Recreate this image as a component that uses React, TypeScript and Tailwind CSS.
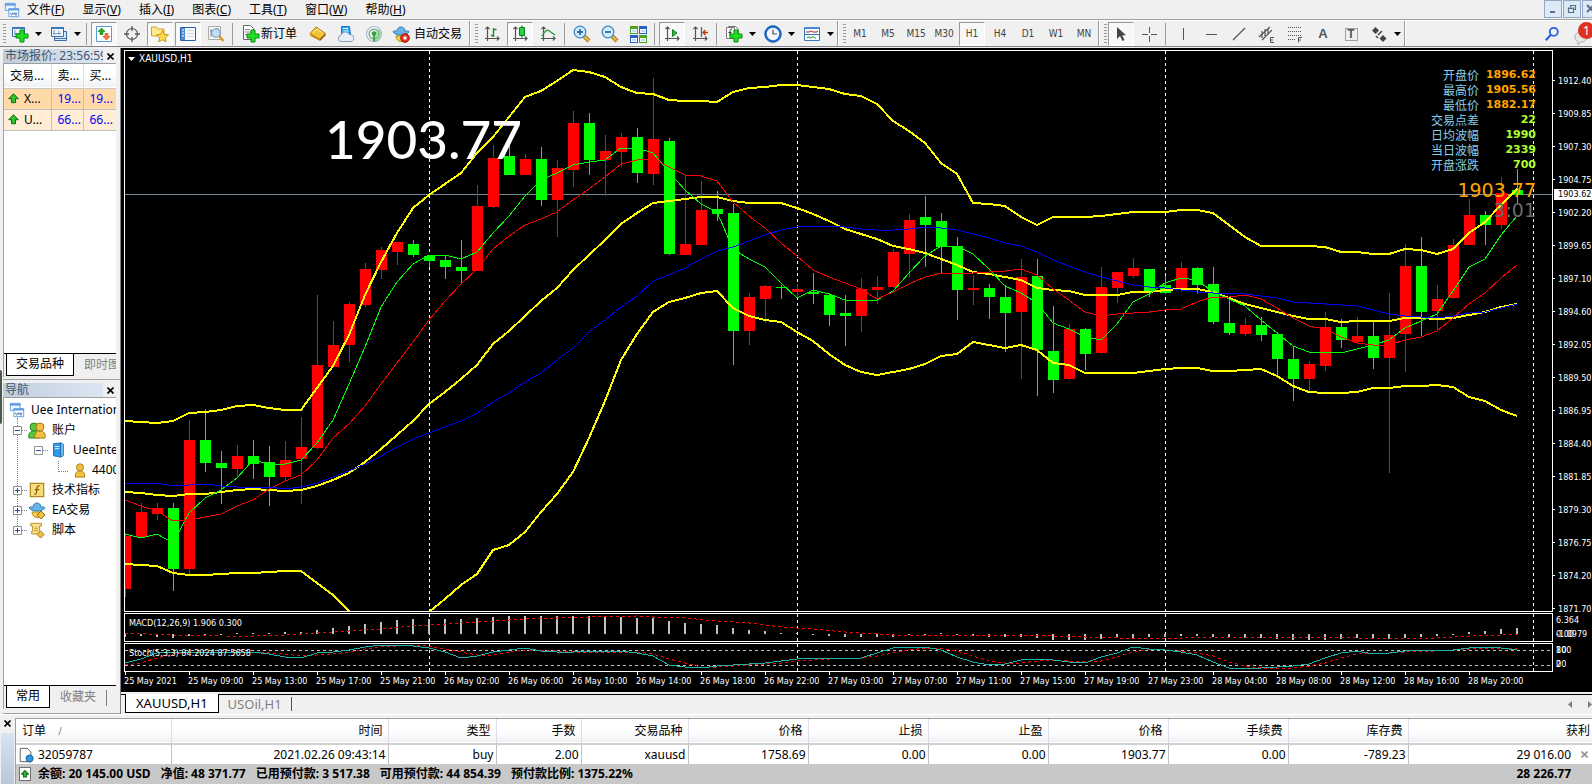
import type { ReactNode } from 'react';

type Candle = [number, number, number, number, 0 | 1];

// high, body top, body bottom, low (chart levels, 0 is the top), 1 = rising
const CANDLES: Candle[] = [
  [1333, 1342, 1488, 1510, 1], [1252, 1276, 1346, 1346, 1], [1252, 1266, 1282, 1298, 1], [1252, 1265, 1433, 1494, 0],
  [1023, 1078, 1433, 1446, 1], [993, 1078, 1142, 1166, 0], [1109, 1142, 1155, 1254, 0], [1092, 1122, 1158, 1183, 1],
  [1078, 1122, 1144, 1186, 0], [1095, 1139, 1180, 1260, 0], [1081, 1133, 1180, 1191, 1], [1015, 1098, 1131, 1254, 1],
  [679, 872, 1100, 1103, 1], [751, 817, 878, 878, 1], [699, 704, 817, 864, 1], [591, 608, 707, 712, 1],
  [547, 556, 611, 635, 1], [534, 534, 561, 597, 1], [528, 539, 569, 575, 0], [569, 572, 586, 602, 0],
  [572, 583, 602, 635, 0], [528, 602, 613, 646, 0], [377, 435, 613, 613, 1], [267, 303, 437, 440, 1],
  [262, 297, 349, 349, 0], [292, 305, 349, 349, 1], [272, 305, 418, 435, 0], [308, 330, 418, 520, 1],
  [173, 206, 336, 382, 1], [179, 206, 308, 349, 0], [239, 283, 308, 407, 1], [234, 245, 286, 327, 1],
  [220, 245, 344, 371, 0], [83, 250, 347, 377, 1], [248, 256, 567, 569, 0], [349, 539, 569, 569, 1],
  [366, 446, 542, 542, 1], [393, 443, 457, 476, 0], [429, 454, 778, 872, 0], [674, 685, 778, 817, 1],
  [652, 655, 690, 756, 1], [652, 657, 660, 690, 0], [649, 663, 671, 688, 1], [619, 671, 677, 704, 0],
  [674, 679, 734, 765, 0], [679, 729, 737, 820, 0], [633, 663, 737, 781, 1], [627, 657, 666, 704, 1],
  [553, 561, 657, 660, 1], [457, 473, 567, 633, 1], [407, 465, 487, 602, 0], [454, 476, 547, 619, 0],
  [520, 545, 666, 748, 0], [624, 660, 666, 707, 1], [649, 660, 685, 745, 0], [652, 685, 729, 836, 0],
  [580, 630, 726, 911, 1], [580, 627, 831, 957, 0], [710, 834, 913, 949, 0], [759, 773, 911, 913, 1],
  [770, 773, 842, 886, 0], [602, 657, 839, 842, 1], [616, 616, 660, 701, 1], [578, 605, 627, 633, 1],
  [608, 608, 668, 685, 0], [627, 652, 674, 677, 0], [589, 605, 663, 671, 1], [602, 605, 652, 677, 0],
  [602, 649, 754, 759, 0], [690, 756, 784, 790, 0], [743, 762, 787, 792, 1], [740, 762, 790, 806, 0],
  [781, 787, 856, 908, 0], [822, 856, 911, 971, 0], [861, 869, 911, 943, 1], [726, 767, 875, 889, 1],
  [745, 767, 803, 825, 0], [740, 792, 809, 812, 1], [748, 792, 853, 883, 0], [674, 790, 853, 1169, 1],
  [539, 600, 787, 891, 1], [520, 600, 726, 795, 0], [652, 690, 723, 779, 1], [525, 542, 688, 690, 1],
  [415, 459, 542, 542, 1], [448, 459, 487, 542, 0], [355, 399, 487, 498, 1], [333, 391, 404, 426, 0],
];

const UPPER = [
  1026, 1028, 1031, 1025, 1004, 1002, 997, 986, 981, 991, 995, 995, 935, 875, 790, 680, 590, 508, 441, 405, 373, 343,
  290, 246, 190, 135, 117, 92, 61, 65, 81, 108, 125, 127, 142, 146, 147, 148, 120, 111, 108, 103, 101, 108, 114, 127,
  132, 155, 202, 228, 261, 315, 348, 426, 430, 435, 466, 488, 465, 465, 464, 462, 458, 452, 451, 450, 446, 445, 455,
  488, 520, 544, 544, 544, 546, 548, 561, 562, 566, 566, 552, 556, 567, 554, 510, 478, 433, 389,
];

const MIDDLE = [
  1222, 1225, 1231, 1232, 1228, 1226, 1222, 1216, 1213, 1217, 1218, 1217, 1206, 1189, 1168, 1138, 1103, 1064, 1027,
  979, 945, 911, 871, 813, 778, 737, 697, 659, 612, 569, 527, 484, 455, 427, 422, 416, 411, 409, 420, 426, 427, 427,
  441, 458, 477, 499, 513, 526, 545, 554, 565, 580, 596, 615, 622, 630, 639, 660, 667, 669, 679, 680, 679, 672, 670,
  667, 663, 663, 672, 689, 703, 714, 725, 736, 745, 746, 753, 752, 752, 750, 742, 742, 746, 744, 734, 725, 713, 703,
];

const LOWER = [
  1419, 1422, 1425, 1445, 1449, 1449, 1448, 1445, 1444, 1442, 1439, 1438, 1473, 1504, 1550, 1620, 1660, 1640, 1590,
  1552, 1516, 1477, 1448, 1381, 1366, 1332, 1277, 1226, 1167, 1073, 972, 858, 786, 727, 700, 689, 675, 668, 716, 737,
  747, 755, 780, 807, 843, 871, 890, 900, 890, 882, 870, 848, 843, 808, 816, 826, 817, 830, 866, 873, 893, 894, 894,
  894, 888, 884, 881, 881, 888, 888, 885, 883, 903, 929, 945, 948, 949, 945, 935, 936, 931, 929, 926, 933, 959, 972,
  996, 1013,
];

const MA_FAST = [
  1338, 1349, 1336, 1362, 1280, 1239, 1215, 1184, 1134, 1145, 1145, 1133, 1086, 1023, 925, 823, 713, 645, 595, 570,
  570, 581, 561, 508, 461, 406, 363, 345, 323, 314, 309, 276, 276, 288, 340, 390, 430, 452, 553, 580, 603, 647, 688,
  666, 676, 693, 694, 694, 668, 618, 571, 545, 545, 568, 609, 654, 675, 702, 757, 773, 796, 804, 760, 700, 676, 646,
  634, 637, 670, 690, 711, 748, 785, 821, 837, 837, 840, 829, 818, 802, 769, 752, 732, 668, 603, 580, 515, 461,
];

const MA_MID = [
  1243, 1261, 1275, 1301, 1299, 1289, 1283, 1261, 1244, 1214, 1192, 1175, 1134, 1072, 1034, 984, 924, 866, 808, 748,
  695, 648, 607, 552, 516, 486, 471, 451, 417, 387, 356, 320, 308, 306, 327, 349, 353, 365, 425, 462, 496, 537, 571,
  611, 629, 647, 663, 690, 670, 648, 631, 620, 620, 620, 615, 614, 608, 625, 662, 692, 727, 736, 733, 728, 727, 722,
  718, 700, 684, 684, 679, 690, 715, 742, 765, 774, 794, 811, 818, 818, 802, 796, 779, 744, 703, 675, 633, 598,
];

const MA_SLOW = [
  1198, 1198, 1198, 1206, 1203, 1200, 1205, 1207, 1207, 1209, 1212, 1208, 1198, 1180, 1164, 1145, 1122, 1098, 1077,
  1060, 1044, 1026, 1003, 974, 950, 919, 893, 858, 825, 782, 747, 713, 681, 642, 625, 604, 580, 559, 548, 531, 515,
  502, 493, 490, 491, 493, 498, 501, 502, 498, 493, 494, 500, 512, 524, 537, 544, 561, 584, 601, 617, 631, 642, 653,
  657, 661, 666, 671, 673, 675, 678, 683, 689, 698, 702, 703, 707, 711, 722, 732, 737, 741, 742, 738, 730, 725, 715,
  704,
];

const MACD = [
  111, 109, 110, 113, 109, 108, 105, 99, 99, 99, 96, 96, 90, 84, 78, 72, 66, 60, 57, 57, 57, 57, 54, 51, 48, 48, 48,
  48, 48, 48, 48, 51, 54, 54, 63, 69, 72, 75, 84, 90, 93, 99, 99, 105, 108, 111, 111, 111, 111, 105, 105, 99, 105,
  108, 110, 111, 112, 114, 120, 120, 120, 117, 111, 114, 111, 111, 108, 109, 111, 111, 114, 114, 117, 120, 120, 120,
  117, 114, 117, 117, 114, 111, 108, 105, 96, 93, 87, 84,
];

const MACD_SIGNAL: [number, number][] = [
  [0, 99], [3, 105], [6, 109], [8, 107], [10, 104], [12, 99], [14, 93], [16, 87], [18, 78], [19, 74], [21, 69],
  [23, 63], [25, 57], [27, 53], [29, 51], [32, 48], [33, 51], [35, 54], [37, 63], [39, 69], [41, 80], [43, 87],
  [45, 96], [46, 99], [48, 105], [50, 106], [56, 106], [58, 108], [60, 112], [62, 114], [66, 115], [69, 110],
  [74, 110], [77, 113], [80, 115], [82, 113], [84, 108], [86, 105], [87, 102],
];

const STOCH_K = [
  190, 178, 160, 155, 155, 155, 155, 156, 157, 163, 170, 173, 160, 156, 151, 142, 136, 136, 139, 143, 157, 175, 169,
  155, 149, 145, 152, 157, 157, 154, 154, 154, 160, 169, 196, 202, 205, 199, 196, 193, 190, 182, 177, 173, 175, 175,
  175, 160, 145, 142, 142, 151, 172, 187, 196, 192, 181, 178, 180, 187, 190, 172, 160, 142, 146, 151, 157, 165, 186,
  204, 208, 205, 202, 199, 193, 175, 160, 154, 163, 160, 152, 151, 151, 151, 144, 142, 145, 150,
];

const STOCH_D = [
  195, 189, 175, 163, 157, 155, 155, 156, 157, 159, 163, 168, 166, 163, 156, 148, 141, 138, 136, 139, 146, 157, 166,
  166, 157, 151, 149, 153, 156, 156, 155, 155, 157, 163, 178, 190, 202, 202, 199, 196, 193, 189, 184, 179, 176, 175,
  175, 169, 160, 149, 143, 145, 152, 168, 184, 190, 190, 184, 181, 182, 186, 183, 172, 157, 148, 149, 152, 158, 169,
  186, 199, 205, 205, 203, 199, 190, 175, 163, 159, 159, 157, 154, 152, 151, 148, 145, 145, 146,
];

const STEP = 16;
const DAY_BREAKS = [19, 42, 65, 88];

const levelY = (v: number) => Math.round(v / 2.751 - 3);
const line = (values: number[], toY: (v: number) => number) =>
  values.map((v, i) => `${i * STEP},${toY(v)}`).join(' ');
const macdY = (v: number) => Math.round(v / 3 - 14);
const stochY = (v: number) => Math.round(v / 3 - 44);

const PRICES = [
  '1912.40', '1909.85', '1907.30', '1904.75', '1902.20', '1899.65', '1897.10', '1894.60', '1892.05', '1889.50',
  '1886.95', '1884.40', '1881.85', '1879.30', '1876.75', '1874.20', '1871.70',
];

const TIMES = [
  '25 May 2021', '25 May 09:00', '25 May 13:00', '25 May 17:00', '25 May 21:00', '26 May 02:00', '26 May 06:00',
  '26 May 10:00', '26 May 14:00', '26 May 18:00', '26 May 22:00', '27 May 03:00', '27 May 07:00', '27 May 11:00',
  '27 May 15:00', '27 May 19:00', '27 May 23:00', '28 May 04:00', '28 May 08:00', '28 May 12:00', '28 May 16:00',
  '28 May 20:00',
];

const MENUS = [
  ['文件', 'F'], ['显示', 'V'], ['插入', 'I'], ['图表', 'C'], ['工具', 'T'], ['窗口', 'W'], ['帮助', 'H'],
];

const STATS = [
  { label: '开盘价', value: '1896.62', tone: 'text-[#ffa500]' },
  { label: '最高价', value: '1905.56', tone: 'text-[#ffa500]' },
  { label: '最低价', value: '1882.17', tone: 'text-[#ffa500]' },
  { label: '交易点差', value: '22', tone: 'text-[#adff2f]' },
  { label: '日均波幅', value: '1990', tone: 'text-[#adff2f]' },
  { label: '当日波幅', value: '2339', tone: 'text-[#adff2f]' },
  { label: '开盘涨跌', value: '700', tone: 'text-[#adff2f]' },
];

const ORDER_COLUMNS = [
  { title: '时间', value: '2021.02.26 09:43:14', width: 'w-[217px]' },
  { title: '类型', value: 'buy', width: 'w-[108px]' },
  { title: '手数', value: '2.00', width: 'w-[85px]' },
  { title: '交易品种', value: 'xauusd', width: 'w-[107px]' },
  { title: '价格', value: '1758.69', width: 'w-[120px]' },
  { title: '止损', value: '0.00', width: 'w-[120px]' },
  { title: '止盈', value: '0.00', width: 'w-[120px]' },
  { title: '价格', value: '1903.77', width: 'w-[120px]' },
  { title: '手续费', value: '0.00', width: 'w-[120px]' },
  { title: '库存费', value: '-789.23', width: 'w-[120px]' },
];

/* ---------- Icons ---------- */

function Icon({ children, size = 18 }: { children: ReactNode; size?: number }) {
  return (
    <svg width={size} height={size} viewBox="0 0 18 18" fill="none" className="shrink-0" aria-hidden="true">
      {children}
    </svg>
  );
}

const Plus = ({ x = 6, y = 6 }: { x?: number; y?: number }) => (
  <path d={`M${x + 4} ${y}h4v4h4v4h-4v4h-4v-4h-4v-4h4z`} fill="#1fe01f" stroke="#0a8a12" />
);

const AppIcon = () => (
  <Icon size={16}>
    <path d="M1.5 1.5h11v8h-11z" fill="#eaf3fc" stroke="#5a9ae0" />
    <path d="M1 3h12" stroke="#5a9ae0" strokeWidth="2" />
    <path d="M5.5 7.5h11v9h-11z" fill="#fff" stroke="#5a9ae0" />
    <path d="M5 8.5h12" stroke="#5a9ae0" strokeWidth="2" />
    <path d="M7 12l1.5 3 1.5-3 1 2 1.5-2 1 3 1-3" stroke="#3a7acc" />
  </Icon>
);

const NewChartIcon = () => (
  <Icon>
    <path d="M1.5 2.5h12v9h-12z" fill="#eef6fd" stroke="#3a6ea5" />
    <path d="M1 3h13" stroke="#3a7ab8" strokeWidth="2" />
    <path d="M4 5v5M3 8.5h8M9 6v4" stroke="#7a9cb8" />
    <Plus x={5} y={5} />
  </Icon>
);

const ProfilesIcon = () => (
  <Icon>
    <path d="M4.5 6.5h12v9h-12z" fill="#d8e9f8" stroke="#3a6ea5" />
    <path d="M1.5 2.5h12v9h-12z" fill="#eef6fd" stroke="#3a6ea5" />
    <path d="M1 3h13" stroke="#3a7ab8" strokeWidth="2" />
    <path d="M4 5v5M3 8.5h8M9 6v4" stroke="#7a9cb8" />
    <path d="M5 13.5h11" stroke="#3a7ab8" />
  </Icon>
);

const MarketWatchIcon = () => (
  <Icon>
    <path d="M1.5 1.5h15v15h-15z" fill="#fff" stroke="#5a9bd5" />
    <path d="M6.5 3l3.5 3.5H8v3H5v-3H3z" fill="#20b020" stroke="#0a7a12" strokeWidth=".6" />
    <path d="M11.5 15l-3.5-3.5h2v-3h3v3h2z" fill="#ff7a40" stroke="#c03a10" strokeWidth=".6" />
  </Icon>
);

const TargetIcon = () => (
  <Icon>
    <circle cx="9" cy="9" r="5.5" stroke="#555" strokeWidth="1.2" />
    <path d="M9 1v5M9 12v5M1 9h5M12 9h5" stroke="#555" strokeWidth="1.3" />
  </Icon>
);

const NavigatorIcon = () => (
  <Icon>
    <path d="M.5 2h5l1.5 2h6v7H.5z" fill="#ffe98a" stroke="#c9a227" />
    <path
      d="M11.5 5.5l1.8 3.8 4.2.5-3.1 2.9.8 4.2-3.7-2-3.7 2 .8-4.2-3.1-2.9 4.2-.5z"
      fill="#ffd94a"
      stroke="#b8860b"
      strokeWidth=".8"
    />
  </Icon>
);

const TerminalIcon = () => (
  <Icon>
    <path d="M1.5 2.5h15v13h-15z" fill="#f6faff" stroke="#2a5fa5" />
    <path d="M2 3h4v12H2z" fill="#4a8ad4" />
    <path d="M8 5.5h7M8 8.5h7M8 11.5h7" stroke="#cddced" />
    <path d="M3 5h2M3 8h2M3 11h2" stroke="#fff" />
  </Icon>
);

const TesterIcon = () => (
  <Icon>
    <path d="M1.5 1.5h12v13h-12z" fill="#f7f7f2" stroke="#aaa" />
    <path d="M4 4v8M11 3v5M3 6h3" stroke="#888" />
    <circle cx="9" cy="8" r="4.3" fill="#b7dbf7" fillOpacity=".85" stroke="#6a9cc8" />
    <path d="M12 11l4.5 5" stroke="#d49b1f" strokeWidth="2.5" />
  </Icon>
);

const OrderIcon = () => (
  <Icon>
    <path d="M1.5.5h7l3 3v11h-10z" fill="#fff" stroke="#666" />
    <path d="M3 4.5h5M3 7h6M3 9.5h4" stroke="#888" />
    <Plus x={5} y={5} />
  </Icon>
);

const GoldIcon = () => (
  <Icon>
    <path d="M1 8.5L7 2l9.5 6.5L11 15z" fill="#f3c33c" stroke="#b37a10" />
    <path d="M1 8.5l10 5V16L1.5 11z" fill="#c98a15" />
    <path d="M11 13.5l5.5-5v2L11 16z" fill="#8f5e0a" />
    <path d="M4.5 7.5L8 4l5 3.5" stroke="#fff0a8" />
  </Icon>
);

const CloudIcon = () => (
  <Icon>
    <path d="M4.5 1.5h8l1 8h-9z" fill="#2fa4f0" stroke="#1678c8" />
    <path d="M6 3.5h5M6.5 6h5" stroke="#fff" />
    <path d="M4 16.5a3.2 3.2 0 010-6.3 4.5 4.5 0 018.5-.5 3.4 3.4 0 011.5 6.8z" fill="#e8eef6" stroke="#8a9bb5" />
  </Icon>
);

const SignalIcon = () => (
  <Icon>
    <circle cx="9" cy="9" r="7.5" stroke="#a8bfd4" strokeWidth="1.2" />
    <circle cx="9" cy="9" r="4.8" stroke="#6fb48a" strokeWidth="1.4" />
    <path d="M9 9v8a7.5 7.5 0 005-13z" fill="#6cc070" fillOpacity=".45" />
    <circle cx="9" cy="8.5" r="2.2" fill="#33a23c" />
    <path d="M9 9v7.5" stroke="#33a23c" strokeWidth="1.8" />
  </Icon>
);

const Hat = () => (
  <>
    <path d="M4 11c0 3.5 2.500 5.500 5 5.500s5-2 5-5.500z" fill="#f6cf4e" stroke="#b98c1a" />
    <path d="M1 6.500c1 2.500 4 3.500 8 3.500s7-1 8-3.500c-2-1-4-.5-4-.5C12.500 3 11 2 9 2S5.500 3 5 6c0 0-2-.5-4 .5z" fill="#67b4e6" stroke="#2f7fb8" />
  </>
);

const AutoTradeIcon = () => (
  <Icon>
    <Hat />
    <circle cx="13" cy="13" r="4.3" fill="#e03020" stroke="#a51509" />
    <path d="M11.5 11.5h3v3h-3z" fill="#fff" />
  </Icon>
);

const Axes = () => (
  <path d="M4.5 2v14M2 13.5h14M2.5 4l2-2 2 2M14 11.5l2 2-2 2" stroke="#555" strokeWidth="1.2" />
);

const BarsIcon = () => (
  <Icon>
    <Axes />
    <path d="M10.5 3v9M10.5 4.5h3M8 10.5h2.5" stroke="#1a8a2a" strokeWidth="1.4" />
  </Icon>
);

const CandlesIcon = () => (
  <Icon>
    <Axes />
    <path d="M11 .5v12" stroke="#1a8a2a" strokeWidth="1.3" />
    <path d="M8.5 2.5h5v8h-5z" fill="#28d048" stroke="#128022" />
  </Icon>
);

const LineIcon = () => (
  <Icon>
    <Axes />
    <path d="M3 11c3-6 6-7 8-4.500L16 10" stroke="#2a9a3a" strokeWidth="1.4" />
  </Icon>
);

const Zoom = ({ minus = false }: { minus?: boolean }) => (
  <Icon>
    <path d="M11 11l5 5" stroke="#8a6410" strokeWidth="4" />
    <path d="M11 11l5 5" stroke="#e8b83a" strokeWidth="2.5" />
    <circle cx="7" cy="7" r="5.8" fill="#d2ebfb" stroke="#3c8ac8" strokeWidth="1.3" />
    <path d={minus ? 'M4 7h6' : 'M4 7h6M7 4v6'} stroke="#2470b0" strokeWidth="1.8" />
  </Icon>
);

const TilesIcon = () => (
  <Icon>
    <path d="M1 1h8v8H1z" fill="#4aa51e" />
    <path d="M10 1h8v8h-8z" fill="#2860c8" />
    <path d="M1 10h8v8H1z" fill="#2860c8" />
    <path d="M10 10h8v8h-8z" fill="#4aa51e" />
    <path d="M2 4h6v4H2zM11 4h6v4h-6zM2 13h6v4H2zM11 13h6v4h-6z" fill="#f4faff" />
    <path d="M3 6h4M12 6h4M3 15h4M12 15h4" stroke="#9cb8dc" />
  </Icon>
);

const ScrollIcon = () => (
  <Icon>
    <Axes />
    <path d="M9.5 4.5v7L14 8z" fill="#2cc040" stroke="#128022" />
  </Icon>
);

const ShiftIcon = () => (
  <Icon>
    <Axes />
    <path d="M10.5 2v10" stroke="#2a6aa8" strokeWidth="1.3" />
    <path d="M12 7.5h5M14.500 5L12 7.500l2.500 2.500" stroke="#c03a10" strokeWidth="1.4" />
  </Icon>
);

const IndicatorIcon = () => (
  <Icon>
    <path d="M3.5 1.5h7l3 3v9h-10z" fill="#fff" stroke="#777" />
    <path d="M1.5 2.5h8v11h-8z" fill="#fff" stroke="#777" />
    <path d="M7 4c-2 0-2 1-2 3v4M3.5 7.5h3" stroke="#333" />
    <Plus x={5} y={5} />
  </Icon>
);

const ClockIcon = () => (
  <Icon>
    <circle cx="9" cy="9" r="7.3" fill="#f2f8ff" stroke="#1f6fd0" strokeWidth="2.2" />
    <circle cx="9" cy="9" r="8.3" stroke="#11479a" strokeWidth=".7" />
    <path d="M9 4.5V9h4" stroke="#555" strokeWidth="1.2" />
  </Icon>
);

const TemplateIcon = () => (
  <Icon>
    <path d="M1.5 2.5h15v13h-15z" fill="#f4f9ff" stroke="#3a76b8" />
    <path d="M1 3h16" stroke="#4a8ad0" strokeWidth="2" />
    <path d="M2 9.5h14" stroke="#3a76b8" />
    <path d="M3 7h3l2-1 2 1h4l1-1" stroke="#a03020" />
    <path d="M4 13l2-1 2 1 2-1.5 3 2" stroke="#2a9a3a" />
  </Icon>
);

const CursorIcon = () => (
  <Icon>
    <path d="M5 2v12l3-3 2.5 5 2-1-2.3-4.8H14z" fill="#444" />
  </Icon>
);

const CrossIcon = () => (
  <Icon>
    <path d="M9.5 2v6M9.5 11v6M2 9.5h6M11 9.5h6" stroke="#555" />
  </Icon>
);

const VLineIcon = () => <Icon><path d="M9.5 3v12" stroke="#555" /></Icon>;
const HLineIcon = () => <Icon><path d="M4 9.5h11" stroke="#555" /></Icon>;
const TrendIcon = () => <Icon><path d="M3 15L15 3" stroke="#555" strokeWidth="1.2" /></Icon>;

const ChannelIcon = () => (
  <Icon>
    <path d="M1 12L12 2M4 15L14 5M4 6v7M7 4v7M10 3v7" stroke="#555" strokeWidth="1.2" />
    <path d="M16 12.5h-3.5v5H16M12.5 15H15" stroke="#555" />
  </Icon>
);

const FiboIcon = () => (
  <Icon>
    <path d="M2 2.5h14M2 6.5h14M2 10.5h14M2 14.5h8" stroke="#555" strokeDasharray="1 1" />
    <path d="M16 12.5h-3.5v5M12.5 15H15" stroke="#555" />
  </Icon>
);

const FrameIcon = () => <path d="M3.5 3.5h12v12h-12z" stroke="#555" strokeDasharray="1 1" />;

const ArrowsIcon = () => (
  <Icon>
    <path d="M5.5 2L9 5.5 5.5 9 2 5.5z" fill="#444" />
    <path d="M13 10l3.5 3.5L13 17l-3.5-3.5z" fill="#444" />
    <path d="M6 11l2 2M8 10l4-4" stroke="#444" strokeWidth="1.5" />
  </Icon>
);

const UpArrow = () => (
  <svg width="11" height="11" viewBox="0 0 11 11" className="shrink-0" aria-hidden="true">
    <path d="M5.5.7l4.8 5H7.5v4h-4v-4H.7z" fill="#2ec22e" stroke="#0b6e12" />
  </svg>
);

const Person = ({ x = 0, tone = '#f0c040', edge = '#a87a10' }: { x?: number; tone?: string; edge?: string }) => (
  <g transform={`translate(${x} 0)`}>
    <path d="M2 17c-1-4 1-7 5-7s6 3 5 7z" fill={tone} stroke={edge} />
    <circle cx="7" cy="6" r="4" fill={tone} stroke={edge} />
  </g>
);

const AccountsIcon = () => (
  <Icon>
    <Person x={-1} tone="#58c83c" edge="#2a8a1a" />
    <Person x={5} />
  </Icon>
);

const AccountIcon = () => <Icon size={16}><Person x={2} /></Icon>;

const ServerIcon = () => (
  <Icon size={16}>
    <path d="M4 2l8-1v16l-8-1.5z" fill="#2a9ae8" stroke="#1668b0" />
    <path d="M12 1l3 1.5v13L12 17z" fill="#7cc8f8" stroke="#1668b0" />
    <path d="M5.5 5h5M5.5 7.5h5" stroke="#fff" />
  </Icon>
);

const FunctionIcon = () => (
  <Icon size={16}>
    <path d="M1.5 1.5h15v15h-15z" fill="#f8dc7a" stroke="#b08a20" strokeWidth="1.4" />
    <path d="M12 4.5c-2.5-1-3 1-3.3 4.5S8 14.5 6 13.5M6.5 8.5h5" stroke="#7a5a00" strokeWidth="1.3" />
  </Icon>
);

const Gem = () => <path d="M13 10l4 4-4 4-4-4z" fill="#f0c040" stroke="#9a7010" />;

const ExpertIcon = () => (
  <Icon>
    <Hat />
    <Gem />
  </Icon>
);

const ScriptIcon = () => (
  <Icon size={16}>
    <path d="M2 1.5h12v3h-2v9H3v-3h1v-6H2z" fill="#fae08a" stroke="#b08a20" />
    <path d="M6 7h4M6 9.5h4" stroke="#b08a20" />
    <Gem />
  </Icon>
);

const OrderRowIcon = () => (
  <Icon size={16}>
    <path d="M2.5 1.5h8l4 4v11h-12z" fill="#fafafa" stroke="#555" />
    <circle cx="13" cy="13" r="4" fill="#2a96e0" stroke="#155a98" />
  </Icon>
);

/* ---------- Small controls ---------- */

function ToolButton({ label, pressed, children }: { label: string; pressed?: boolean; children: ReactNode }) {
  return (
    <button
      type="button"
      aria-label={label}
      aria-pressed={pressed}
      className={`mx-px flex h-6 w-[26px] shrink-0 items-center justify-center border ${
        pressed ? 'border-[#999] border-r-white border-b-white bg-[#f8f8f8]' : 'border-transparent'
      }`}
    >
      {children}
    </button>
  );
}

function DropButton({ label, children }: { label: string; children: ReactNode }) {
  return (
    <button type="button" aria-label={label} className="flex h-6 w-[39px] shrink-0 items-center gap-[6px] pl-[5px]">
      {children}
      <Caret />
    </button>
  );
}

const Caret = () => (
  <svg width="7" height="4" viewBox="0 0 7 4" className="shrink-0" aria-hidden="true">
    <path d="M0 0h7L3.5 4z" fill="#000" />
  </svg>
);

const Divider = () => <span className="mr-[3px] ml-[2px] h-[22px] w-px shrink-0 bg-[#9a9a9a]" />;

const Grip = () => (
  <span className="ml-1 h-5 w-[3px] shrink-0 bg-[repeating-linear-gradient(to_bottom,#999_0_1px,transparent_1px_3px)]" />
);

const GroupEnd = () => <span className="h-[25px] w-[2px] shrink-0 border-l border-[#9a9a9a] bg-white" />;

const CloseMark = () => (
  <svg width="7" height="7" viewBox="0 0 7 7" aria-hidden="true">
    <path d="M.5.5l6 6M6.5.5l-6 6" stroke="currentColor" strokeWidth="1.6" />
  </svg>
);

/* ---------- Bars ---------- */

function MenuBar() {
  return (
    <header className="flex h-[19px] shrink-0 items-center justify-between overflow-hidden pl-1">
      <nav className="flex items-center gap-[18px]">
        <span className="-mr-[11px]"><AppIcon /></span>
        {MENUS.map(([name, key]) => (
          <button key={key} type="button" className="leading-[18px]">
            {name}(<u>{key}</u>)
          </button>
        ))}
      </nav>
      <div className="-mr-2 flex h-[19px] gap-px text-[#5b6f86]">
        {['最小化', '还原', '关闭'].map((label, i) => (
          <button
            key={label}
            type="button"
            aria-label={label}
            className="flex h-[18px] w-[18px] items-center justify-center border border-[#93a8c2] bg-[#dce9f7]"
          >
            <svg width="10" height="10" viewBox="0 0 10 10" fill="none" stroke="currentColor" aria-hidden="true">
              {i === 0 && <path d="M2 8h5" strokeWidth="2" />}
              {i === 1 && <path d="M3.5 3V1.5h5v4H7M1.5 4.5h5v4h-5zM1 4h6" strokeWidth="1.2" />}
              {i === 2 && <path d="M1 1l7 7M8 1L1 8" strokeWidth="2" />}
            </svg>
          </button>
        ))}
      </div>
    </header>
  );
}

function Toolbar() {
  return (
    <div className="flex h-7 shrink-0 items-center overflow-hidden border-y border-t-[#a0a0a0] border-b-[#808080] pt-px shadow-[inset_0_1px_0_#fff]">
      <div className="-ml-px flex items-center">
        <Grip />
        <DropButton label="新图表"><NewChartIcon /></DropButton>
        <DropButton label="配置文件"><ProfilesIcon /></DropButton>
        <Divider />
        <ToolButton label="市场报价" pressed><MarketWatchIcon /></ToolButton>
        <ToolButton label="数据窗口"><TargetIcon /></ToolButton>
        <ToolButton label="导航" pressed><NavigatorIcon /></ToolButton>
        <ToolButton label="终端" pressed><TerminalIcon /></ToolButton>
        <ToolButton label="策略测试"><TesterIcon /></ToolButton>
        <Divider />
        <button type="button" className="flex h-6 w-[68px] items-center gap-px pl-[6px] whitespace-nowrap">
          <OrderIcon />
          新订单
        </button>
        <ToolButton label="MetaEditor"><GoldIcon /></ToolButton>
        <ToolButton label="社区"><CloudIcon /></ToolButton>
        <ToolButton label="信号"><SignalIcon /></ToolButton>
        <button type="button" className="flex h-6 w-[81px] items-center gap-1 pl-1 whitespace-nowrap">
          <AutoTradeIcon />
          自动交易
        </button>
      </div>
      <GroupEnd />
      <Grip />
      <ToolButton label="柱状图"><BarsIcon /></ToolButton>
      <ToolButton label="阴阳烛" pressed><CandlesIcon /></ToolButton>
      <ToolButton label="折线图"><LineIcon /></ToolButton>
      <Divider />
      <ToolButton label="放大"><Zoom /></ToolButton>
      <ToolButton label="缩小"><Zoom minus /></ToolButton>
      <ToolButton label="平铺窗口"><TilesIcon /></ToolButton>
      <Divider />
      <ToolButton label="自动滚动" pressed><ScrollIcon /></ToolButton>
      <ToolButton label="图表平移"><ShiftIcon /></ToolButton>
      <Divider />
      <DropButton label="技术指标"><IndicatorIcon /></DropButton>
      <DropButton label="时间周期"><ClockIcon /></DropButton>
      <DropButton label="模板"><TemplateIcon /></DropButton>
      <GroupEnd />
      <Grip />
      {['M1', 'M5', 'M15', 'M30', 'H1', 'H4', 'D1', 'W1', 'MN'].map((frame) => (
        <ToolButton key={frame} label={frame} pressed={frame === 'H1'}>
          <span className="font-['DejaVu_Sans_Condensed','DejaVu_Sans',sans-serif] text-[10px] text-[#444]">{frame}</span>
        </ToolButton>
      ))}
      <GroupEnd />
      <Grip />
      <ToolButton label="光标" pressed><CursorIcon /></ToolButton>
      <ToolButton label="十字准线"><CrossIcon /></ToolButton>
      <Divider />
      <ToolButton label="垂直线"><VLineIcon /></ToolButton>
      <ToolButton label="水平线"><HLineIcon /></ToolButton>
      <ToolButton label="趋势线"><TrendIcon /></ToolButton>
      <ToolButton label="等距通道"><ChannelIcon /></ToolButton>
      <ToolButton label="斐波那契回调"><FiboIcon /></ToolButton>
      <ToolButton label="文本">
        <span className="font-['Liberation_Sans',sans-serif] text-[13px] font-bold text-[#555]">A</span>
      </ToolButton>
      <ToolButton label="文字标签">
        <span className="relative flex items-center justify-center">
          <Icon><FrameIcon /></Icon>
          <span className="absolute font-['Liberation_Sans',sans-serif] text-xs font-bold text-[#555]">T</span>
        </span>
      </ToolButton>
      <DropButton label="箭头"><ArrowsIcon /></DropButton>
      <GroupEnd />
      <div className="ml-auto flex items-center gap-[14px]">
        <button type="button" aria-label="搜索">
          <Icon size={16}>
            <circle cx="11" cy="6.5" r="4.5" stroke="#2a62d8" strokeWidth="2" fill="#eef4ff" />
            <path d="M7.5 10L2 16" stroke="#2a62d8" strokeWidth="2.5" />
          </Icon>
        </button>
        <button type="button" aria-label="消息" className="relative h-6 w-[18px]">
          <svg width="16" height="16" viewBox="0 0 16 16" className="absolute bottom-0 left-0" aria-hidden="true">
            <path d="M7 2c4 0 6 2 6 5s-3 5-6 5l-3 3v-3.500C2 11 1 9 1 7c0-3 2-5 6-5z" fill="#e6e6ea" stroke="#b0b0b8" />
          </svg>
          <span className="absolute top-0 left-1 flex h-[17px] w-[17px] items-center justify-center rounded-full bg-[#e0301e] text-[13px] text-white">
            1
          </span>
        </button>
      </div>
    </div>
  );
}

/* ---------- Left side ---------- */

function PanelTitle({ children }: { children: ReactNode }) {
  return (
    <div className="flex h-[14px] items-center justify-between pr-[6px]">
      <h2 className="h-[14px] w-[100px] overflow-hidden bg-linear-to-r from-[#bfcddb] to-[#dbe6f2] pl-[2px] leading-[14px] whitespace-nowrap text-[#44546a]">
        {children}
      </h2>
      <button type="button" aria-label="关闭"><CloseMark /></button>
    </div>
  );
}

function PanelTabs({ active, other, divider }: { active: string; other: string; divider?: boolean }) {
  return (
    <div className="flex h-6 shrink-0 overflow-hidden border-t border-black bg-[#f0f0f0] whitespace-nowrap">
      <button type="button" className="-mt-px ml-[2px] h-[23px] border border-t-0 border-black bg-white px-[9px] leading-[22px]">
        {active}
      </button>
      <button type="button" className="ml-[10px] h-[22px] leading-[22px] text-[#808080]">{other}</button>
      {divider && <span className="mt-1 ml-[10px] h-4 w-px bg-[#808080]" />}
    </div>
  );
}

function MarketWatch() {
  return (
    <section className="flex h-[332px] flex-col border-b border-[#a0a0a0] pt-px pb-[2px]">
      <PanelTitle>市场报价: 23:56:59</PanelTitle>
      <div className="mr-1 flex flex-1 flex-col border-t border-l border-[#a0a0a0] bg-white">
        <table className="w-full table-fixed border-collapse">
          <thead>
            <tr className="h-6 border-b border-[#c8c8c8] bg-linear-to-b from-white from-50% to-[#eff1f4]">
              <th className="w-[47px] border-r border-[#dde] pl-[6px] text-left font-normal">交易...</th>
              <th className="w-8 border-r border-[#dde] pl-[6px] text-left font-normal">卖...</th>
              <th className="pl-[6px] text-left font-normal">买...</th>
            </tr>
          </thead>
          <tbody>
            {[
              { name: 'X...', price: '19...', tone: 'bg-[#ffdaa8]' },
              { name: 'U...', price: '66...', tone: 'bg-[#ffedd5]' },
            ].map((row) => (
              <tr key={row.name} className={`h-[21px] border-b border-[#c0c0c0] ${row.tone}`}>
                <td className="border-r border-[#c0c0c0] pl-1">
                  <span className="flex items-center gap-[5px]">
                    <UpArrow />
                    {row.name}
                  </span>
                </td>
                <td className="border-r border-[#c0c0c0] pl-[6px] text-[#0000ff]">{row.price}</td>
                <td className="pl-[6px] text-[#0000ff]">{row.price}</td>
              </tr>
            ))}
          </tbody>
        </table>
        <div className="flex-1" />
        <PanelTabs active="交易品种" other="即时图表" />
      </div>
    </section>
  );
}

const Expander = ({ open }: { open?: boolean }) => (
  <svg width="9" height="9" viewBox="0 0 9 9" fill="none" className="shrink-0" aria-hidden="true">
    <path d="M.5.5h8v8h-8z" fill="#fff" stroke="#919191" />
    <path d={open ? 'M2 4.5h5' : 'M2 4.5h5M4.5 2v5'} stroke="#234b9a" />
  </svg>
);

function TreeRow({ nested, open, icon, text }: { nested?: boolean; open?: boolean; icon: ReactNode; text: string }) {
  return (
    <li className={`relative flex h-5 items-center gap-[6px] ${nested ? 'pl-[30px]' : 'pl-[9px]'}`}>
      <span className="flex w-[14px] shrink-0 items-center">
        <Expander open={open} />
        <span className="h-px flex-1 border-t border-dotted border-[#808080]" />
      </span>
      <span className="-ml-[5px] flex w-[18px] shrink-0 justify-center">{icon}</span>
      <span>{text}</span>
    </li>
  );
}

function Navigator() {
  return (
    <section className="flex flex-1 flex-col border-b border-[#a0a0a0] pt-[3px] pb-1">
      <PanelTitle>导航</PanelTitle>
      <div className="mr-1 flex flex-1 flex-col overflow-hidden border-t border-l border-[#a0a0a0] bg-white">
        <ul className="relative flex-1 overflow-hidden pt-[2px] whitespace-nowrap">
          <li className="absolute top-5 left-[13px] h-[110px] border-l border-dotted border-[#808080]" />
          <li className="flex h-5 items-center gap-[6px] pl-[5px]">
            <AppIcon />
            <span>Uee International</span>
          </li>
          <TreeRow open icon={<AccountsIcon />} text="账户" />
          <TreeRow nested open icon={<ServerIcon />} text="UeeInte" />
          <li className="flex h-5 items-center gap-1 pl-[54px]">
            <span className="-mt-2 h-[11px] w-[10px] shrink-0 border-b border-l border-dotted border-[#808080]" />
            <AccountIcon />
            <span>4400</span>
          </li>
          <TreeRow icon={<FunctionIcon />} text="技术指标" />
          <TreeRow icon={<ExpertIcon />} text="EA交易" />
          <TreeRow icon={<ScriptIcon />} text="脚本" />
        </ul>
        <PanelTabs active="常用" other="收藏夹" divider />
      </div>
    </section>
  );
}

/* ---------- Chart ---------- */

function DayBreaks({ height }: { height: number }) {
  return (
    <>
      {DAY_BREAKS.map((i) => (
        <path key={i} d={`M${i * STEP + 0.5} 0v${height}`} stroke="#fff" strokeDasharray="3 3" />
      ))}
    </>
  );
}

function PricePlot() {
  return (
    <svg
      viewBox="0 0 1427 560"
      preserveAspectRatio="none"
      fill="none"
      shapeRendering="crispEdges"
      className="absolute inset-0 h-full w-full"
      aria-hidden="true"
    >
      <DayBreaks height={560} />
      <path d="M0 143.5h1427" stroke="#778899" />
      {CANDLES.map(([high, top, bottom, low, up], i) => {
        const color = up ? '#ff0000' : '#00ff00';
        const x = i * STEP;
        return (
          <g key={i} fill={color}>
            <rect x={x} y={levelY(high)} width="1" height={levelY(low) - levelY(high)} />
            <rect x={x - 5} y={levelY(top)} width="11" height={Math.max(1, levelY(bottom) - levelY(top))} />
          </g>
        );
      })}
      <polyline points={line(UPPER, levelY)} stroke="#ffff00" strokeWidth="2" />
      <polyline points={line(MIDDLE, levelY)} stroke="#ffff00" strokeWidth="2" />
      <polyline points={line(LOWER, levelY)} stroke="#ffff00" strokeWidth="2" />
      <polyline points={line(MA_FAST, levelY)} stroke="#00ff00" />
      <polyline points={line(MA_MID, levelY)} stroke="#ff0000" />
      <polyline points={line(MA_SLOW, levelY)} stroke="#0000ff" />
    </svg>
  );
}

function MacdPlot() {
  return (
    <svg
      viewBox="0 0 1427 27"
      preserveAspectRatio="none"
      fill="none"
      shapeRendering="crispEdges"
      className="absolute inset-0 h-full w-full"
      aria-hidden="true"
    >
      <DayBreaks height={27} />
      {MACD.map((v, i) => {
        const y = macdY(v);
        return <rect key={i} x={i * STEP - 1} y={Math.min(y, 20)} width="2" height={Math.abs(y - 20)} fill="#c0c0c0" />;
      })}
      <polyline
        points={MACD_SIGNAL.map(([i, v]) => `${i * STEP},${macdY(v)}`).join(' ')}
        stroke="#ff0000"
        strokeDasharray="3 3"
      />
    </svg>
  );
}

function StochPlot() {
  return (
    <svg
      viewBox="0 0 1427 27"
      preserveAspectRatio="none"
      fill="none"
      shapeRendering="crispEdges"
      className="absolute inset-0 h-full w-full"
      aria-hidden="true"
    >
      <DayBreaks height={27} />
      <path d="M0 6.5h1427M0 21.5h1427" stroke="#c0c0c0" strokeDasharray="3 3" />
      <polyline points={line(STOCH_D, stochY)} stroke="#ff0000" strokeDasharray="3 3" />
      <polyline points={line(STOCH_K, stochY)} stroke="#20b2aa" />
    </svg>
  );
}

function Chart() {
  return (
    <section className="flex min-h-0 flex-1 flex-col bg-black pt-[2px] pl-[3px] font-['DejaVu_Sans_Condensed','DejaVu_Sans',sans-serif] text-[9px] text-white">
      <div className="mb-px flex min-h-0 flex-1">
        <div className="relative flex-1 overflow-hidden border border-white">
          <PricePlot />
          <h1 className="relative flex items-center gap-1 pt-[2px] pl-[3px] text-[10px] leading-3">
            <svg width="7" height="4" viewBox="0 0 7 4" aria-hidden="true"><path d="M0 0h7L3.5 4z" fill="#fff" /></svg>
            XAUUSD,H1
          </h1>
          <div className="absolute top-[56px] left-[200px] font-[Lato,sans-serif] text-[53px] leading-[64px] font-medium">
            1903.77
          </div>
          <div className="absolute top-[16px] right-[16px] flex flex-col items-end">
            <dl className="font-['DejaVu_Sans','Noto_Sans_CJK_SC',sans-serif]">
              {STATS.map((s) => (
                <div key={s.label} className="flex h-[15px] items-center justify-end">
                  <dt className="font-['Noto_Sans_CJK_SC',sans-serif] text-xs leading-[15px] text-[#87ceeb]">{s.label}</dt>
                  <dd className={`w-[57px] text-right text-[11px] leading-[15px] font-bold ${s.tone}`}>{s.value}</dd>
                </div>
              ))}
            </dl>
            <div className="mt-2 font-['DejaVu_Sans',sans-serif] text-[19px] leading-5 text-[#ffa500]">1903.77</div>
            <div className="font-['DejaVu_Sans',sans-serif] text-[19px] leading-5 text-[#696969]">3:01</div>
          </div>
        </div>
        <div className="relative w-[39px] pt-[14px]">
          {PRICES.map((p) => (
            <div key={p} className="flex h-[33px] items-center gap-[3px]">
              <span className="h-px w-[2px] bg-white" />
              {p}
            </div>
          ))}
          <div className="absolute top-[139px] left-[1px] h-[11px] w-full bg-white pl-1 leading-[11px] text-black">1903.62</div>
        </div>
      </div>
      <div className="mb-px flex h-[29px] shrink-0">
        <div className="relative flex-1 overflow-hidden border border-white">
          <MacdPlot />
          <div className="relative pt-[3px] pl-1 leading-3">MACD(12,26,9) 1.906 0.300</div>
        </div>
        <div className="relative w-[39px] pl-[3px] leading-[14px]">
          <div>6.364</div>
          <div>0.00</div>
          <div className="absolute top-[14px] left-[3px]">-1.0979</div>
        </div>
      </div>
      <div className="flex h-[29px] shrink-0">
        <div className="relative flex-1 overflow-hidden border border-white">
          <StochPlot />
          <div className="relative pt-[3px] pl-1 leading-3">Stoch(5,3,3) 84.2024 87.5658</div>
        </div>
        <div className="relative w-[39px] pl-[3px] leading-[14px]">
          <div>100</div>
          <div>0</div>
          <div className="absolute top-0 left-[3px]">80</div>
          <div className="absolute top-[14px] left-[3px]">20</div>
        </div>
      </div>
      <div className="flex h-5 shrink-0 overflow-hidden">
        {TIMES.map((t) => (
          <div key={t} className="w-16 shrink-0 whitespace-nowrap">
            <div className="ml-px h-[3px] w-px bg-white" />
            <div className="leading-3">{t}</div>
          </div>
        ))}
      </div>
    </section>
  );
}

function ChartTabs() {
  return (
    <div className="mt-[2px] flex h-5 shrink-0 border-t border-black text-[13px]">
      <button type="button" className="-mt-px ml-1 h-[19px] border border-t-0 border-black bg-white px-[10px] leading-[18px]">
        XAUUSD,H1
      </button>
      <button type="button" className="ml-[9px] h-[18px] leading-[18px] text-[#808080]">USOil,H1</button>
      <span className="mt-[2px] ml-[9px] h-[14px] w-px bg-[#555]" />
      <div className="ml-auto flex items-center gap-4 text-[#808080]">
        <button type="button" aria-label="向左滚动">
          <svg width="4" height="7" viewBox="0 0 4 7" aria-hidden="true"><path d="M4 0v7L0 3.5z" fill="currentColor" /></svg>
        </button>
        <button type="button" aria-label="向右滚动">
          <svg width="4" height="7" viewBox="0 0 4 7" aria-hidden="true"><path d="M0 0v7l4-3.5z" fill="currentColor" /></svg>
        </button>
      </div>
    </div>
  );
}

/* ---------- Terminal ---------- */

function Terminal() {
  return (
    <section className="flex h-[66px] shrink-0">
      <div className="flex w-[15px] shrink-0 flex-col items-center gap-[6px] pt-[2px]">
        <button type="button" aria-label="关闭"><CloseMark /></button>
        <div className="w-[13px] flex-1 bg-linear-to-b from-[#d6e4f3] to-[#b8c8d8]" />
      </div>
      <div className="flex-1 border-t border-l border-[#a0a0a0] bg-white">
        <table className="w-full table-fixed border-collapse">
          <thead>
            <tr className="h-[25px] border-b-2 border-[#d0d0d0] bg-linear-to-b from-white from-50% to-[#eff1f4]">
              <th className="w-[155px] border-r border-[#dde] pl-[6px] text-left font-normal">
                订单 <span className="ml-[9px] text-[10px] text-[#808080]">/</span>
              </th>
              {ORDER_COLUMNS.map((c, i) => (
                <th key={i} className={`${c.width} border-r border-[#dde] pr-[5px] text-right font-normal`}>{c.title}</th>
              ))}
              <th className="pr-[2px] text-right font-normal">获利</th>
            </tr>
          </thead>
          <tbody>
            <tr className="h-5">
              <td className="border-r border-[#c0c0c0] pl-[2px]">
                <span className="flex items-center gap-1">
                  <OrderRowIcon />
                  32059787
                </span>
              </td>
              {ORDER_COLUMNS.map((c, i) => (
                <td key={i} className="border-r border-[#c0c0c0] pr-[2px] text-right">{c.value}</td>
              ))}
              <td className="pr-1">
                <span className="flex items-center justify-end gap-[10px]">
                  29 016.00
                  <button type="button" aria-label="平仓" className="text-[#909090]"><CloseMark /></button>
                </span>
              </td>
            </tr>
            <tr className="h-5 bg-[#c8c8c8] font-bold">
              <td colSpan={11} className="pl-[3px]">
                <span className="flex items-center gap-[7px] whitespace-nowrap">
                  <span className="flex h-[14px] w-3 items-center justify-center border border-[#707070] bg-white">
                    <svg width="8" height="8" viewBox="0 0 11 11" aria-hidden="true">
                      <path d="M5.5.7l4.8 5H7.5v4h-4v-4H.7z" fill="#2ec22e" stroke="#0b6e12" strokeWidth="1.5" />
                    </svg>
                  </span>
                  <span className="flex gap-[10px]">
                    <span>余额: 20 145.00 USD</span>
                    <span>净值: 48 371.77</span>
                    <span>已用预付款: 3 517.38</span>
                    <span>可用预付款: 44 854.39</span>
                    <span>预付款比例: 1375.22%</span>
                  </span>
                </span>
              </td>
              <td className="pr-[21px] text-right">28 226.77</td>
            </tr>
          </tbody>
        </table>
      </div>
    </section>
  );
}

export default function App() {
  return (
    <div className="flex h-screen w-full flex-col overflow-hidden bg-[#f0f0f0] font-['Noto_Sans','Noto_Sans_CJK_SC',sans-serif] text-xs leading-4 text-black">
      <MenuBar />
      <Toolbar />
      <div className="mt-px flex min-h-0 flex-1">
        <aside className="relative flex w-[121px] shrink-0 flex-col border-r border-[#808080] pl-[3px]">
          <span className="absolute top-[322px] left-0 h-[54px] w-[2px] rounded-r-sm bg-[#4a5a50]" />
          <MarketWatch />
          <Navigator />
        </aside>
        <main className="flex min-w-0 flex-1 flex-col">
          <Chart />
          <ChartTabs />
        </main>
      </div>
      <div className="h-1 shrink-0 border-t border-white" />
      <Terminal />
    </div>
  );
}
